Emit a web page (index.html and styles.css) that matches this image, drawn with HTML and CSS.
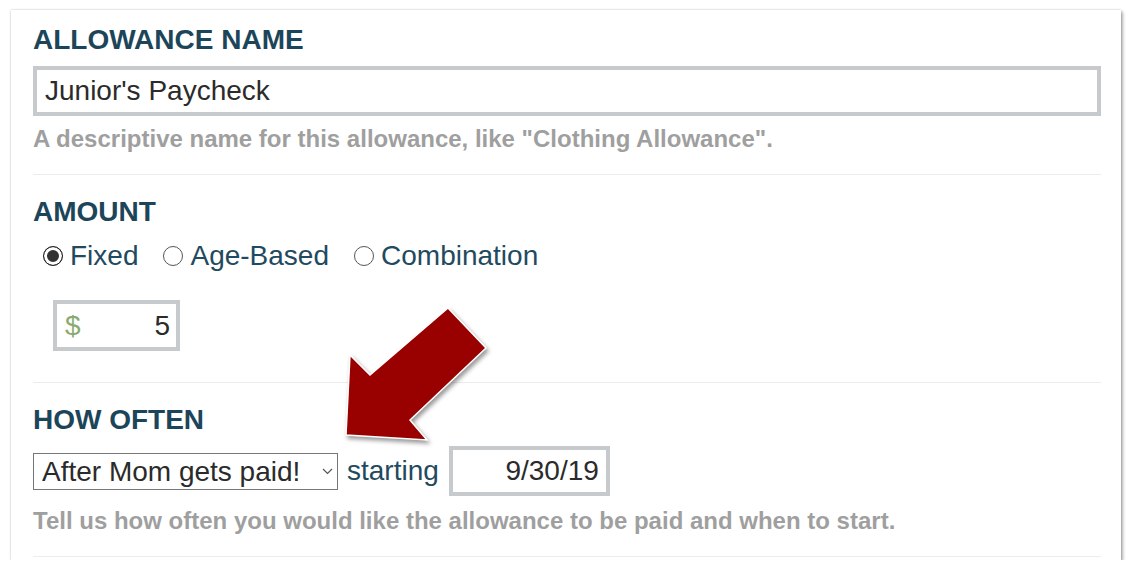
FILE: index.html
```html
<!DOCTYPE html>
<html lang="en">
<head>
  <meta charset="UTF-8" />
  <title>Allowance settings</title>
  <link rel="stylesheet" href="styles.css">
</head>
<body>

  <form class="card">

    <!-- Nom de l'allocation -->
    <section class="field">
      <h2>Allowance Name</h2>
      <input class="text-box name-box" type="text" value="Junior's Paycheck" />
      <p class="hint">A descriptive name for this allowance, like "Clothing Allowance".</p>
    </section>

    <!-- Montant -->
    <section class="field amount">
      <h2>Amount</h2>
      <div class="radios">
        <label class="radio"><input type="radio" name="amount" checked /> Fixed</label>
        <label class="radio"><input type="radio" name="amount" /> Age-Based</label>
        <label class="radio"><input type="radio" name="amount" /> Combination</label>
      </div>
      <div class="money-box">
        <span class="currency">$</span>
        <input type="text" value="5" />
      </div>
    </section>

    <!-- Fréquence -->
    <section class="field">
      <h2>How Often</h2>
      <div class="often-row">
        <span class="select-wrap">
          <select class="often-select">
            <option>After Mom gets paid!</option>
            <option>Weekly</option>
            <option>Monthly</option>
          </select>
          <svg class="chevron" width="11" height="7" viewBox="0 0 11 7">
            <path d="M1 1 L5.5 5.5 L10 1" fill="none" stroke="#555" stroke-width="1.2"/>
          </svg>
        </span>
        <span class="starting">starting</span>
        <input class="text-box date-box" type="text" value="9/30/19" />
      </div>
      <p class="hint">Tell us how often you would like the allowance to be paid and when to start.</p>
    </section>

    <!-- Flèche d'annotation -->
    <svg class="arrow" width="180" height="170" viewBox="0 0 180 170">
      <polygon points="118,13 156,53 80,125 97,145 16,140 20,60 40,80"
               fill="#990000" stroke="#fff" stroke-width="1.5" stroke-linejoin="miter"/>
    </svg>

  </form>

</body>
</html>
```

FILE: styles.css
```css
:root {
  --heading: #1c4559;
  --label: #1f4a60;
  --hint: #9f9f9f;
  --box-border: #c6cacd;
}

body {
  margin: 0;
  background: #fff;
  font-family: "Liberation Sans", Arial, sans-serif;
  color: #2b2b2b;
}

.card {
  position: relative; /* for the annotation arrow */
  margin: 10px 11px 0;
  padding: 0 20px 3px 22px;
  background: #fff;
  box-shadow: 0 0 2px rgba(0, 0, 0, 0.25), 2px 2px 3px rgba(0, 0, 0, 0.3);
}

.field {
  padding: 21px 0 21px;
  border-bottom: 1px solid #ececec;
}

.field:first-child {
  padding-top: 14px;
}

.field.amount {
  padding-bottom: 31px;
}

h2 {
  margin: 0 0 10px;
  font-size: 28px;
  line-height: 32px;
  font-weight: 700;
  text-transform: uppercase;
  color: var(--heading);
}

.text-box {
  box-sizing: border-box;
  height: 50px;
  border: 4px solid var(--box-border);
  font-family: inherit;
  font-size: 28px;
  color: #2b2b2b;
  outline: none;
  background: #fff;
}

.name-box {
  display: block;
  width: 100%;
  padding: 0 8px;
}

.hint {
  margin: 9px 0 0;
  font-size: 24px;
  line-height: 28px;
  font-weight: 700;
  color: var(--hint);
}

/* Boutons radio */
.radios {
  display: flex;
  padding-left: 10px;
  margin-top: 12px;
  height: 32px;
  align-items: center;
}

.radio {
  display: inline-flex;
  align-items: center;
  gap: 7px;
  margin-right: 25px;
  font-size: 28px;
  line-height: 32px;
  color: var(--label);
}

.radio input {
  appearance: none;
  box-sizing: border-box;
  width: 20px;
  height: 20px;
  margin: 0;
  border: 1.5px solid #555;
  border-radius: 50%;
  background: #fff;
}

.radio input:checked {
  border-color: #222;
  background: #333;
  box-shadow: inset 0 0 0 3px #fff;
}

/* Champ du montant */
.money-box {
  display: flex;
  align-items: center;
  box-sizing: border-box;
  width: 127px;
  height: 51px;
  margin: 28px 0 0 20px;
  padding: 0 6px 0 8px;
  border: 4px solid var(--box-border);
}

.currency {
  font-size: 28px;
  color: #8aab6e;
}

.money-box input {
  flex: 1;
  min-width: 0;
  border: none;
  padding: 0;
  font-family: inherit;
  font-size: 28px;
  text-align: right;
  color: #2b2b2b;
  outline: none;
}

/* Ligne fréquence + date */
.often-row {
  display: flex;
  align-items: center;
  gap: 9px;
  margin-top: 9px;
}

.select-wrap {
  position: relative;
  display: inline-block;
}

.often-select {
  appearance: none;
  box-sizing: border-box;
  width: 305px;
  height: 37px;
  padding: 0 30px 0 8px;
  border: 1px solid #777;
  border-radius: 0;
  background: #fff;
  font-family: inherit;
  font-size: 28px;
  color: #2b2b2b;
}

.chevron {
  position: absolute;
  right: 5px;
  top: 15px;
  pointer-events: none;
}

.starting {
  font-size: 28px;
  color: var(--label);
}

.date-box {
  width: 161px;
  padding: 0 7px;
  text-align: right;
  margin-left: 1px;
}

.often-row + .hint {
  margin-top: 11px;
}

.arrow {
  position: absolute;
  left: 319px;
  top: 285px;
  filter: drop-shadow(2px 3px 2px rgba(0, 0, 0, 0.4));
}
```
